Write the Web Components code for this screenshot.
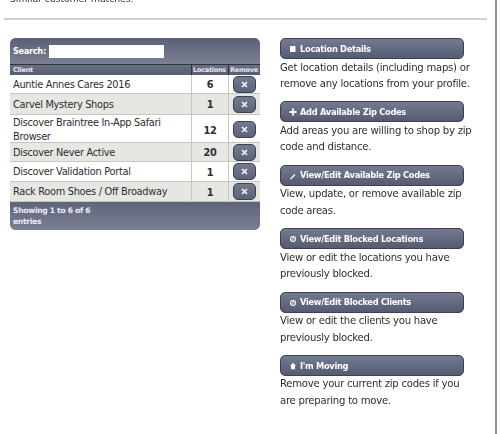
<!DOCTYPE html>
<html>
<head>
<meta charset="utf-8">
<style>
  html, body { margin: 0; padding: 0; background: #fff; }
  body { width: 500px; height: 434px; overflow: hidden; font-family: "DejaVu Sans", sans-serif; color: #333; }
</style>
</head>
<body>
<profile-page>
  <client-table slot="left"></client-table>
  <action-item slot="right" icon="square" label="Location Details">Get location details (including maps) or remove any locations from your profile.</action-item>
  <action-item slot="right" icon="plus" label="Add Available Zip Codes">Add areas you are willing to shop by zip code and distance.</action-item>
  <action-item slot="right" icon="pencil" label="View/Edit Available Zip Codes">View, update, or remove available zip code areas.</action-item>
  <action-item slot="right" icon="block" label="View/Edit Blocked Locations">View or edit the locations you have previously blocked.</action-item>
  <action-item slot="right" icon="block" label="View/Edit Blocked Clients">View or edit the clients you have previously blocked.</action-item>
  <action-item slot="right" icon="home" label="I'm Moving">Remove your current zip codes if you are preparing to move.</action-item>
</profile-page>

<script>
(function (customElements) {
  'use strict';

  const ICONS = {
    square: '<rect x="2" y="2" width="5.5" height="6" fill="#fff"/>',
    plus: '<path d="M5 1.5v7M1.5 5h7" stroke="#fff" stroke-width="1.8"/>',
    pencil: '<path d="M2.5 8L7 3.5" stroke="#fff" stroke-width="1.3"/>',
    block: '<circle cx="5" cy="5" r="2.4" fill="none" stroke="#fff" stroke-width="1.1"/><path d="M3.4 6.6l3.2-3.2" stroke="#fff" stroke-width=".9"/>',
    home: '<path d="M5 1.8L2 5h1v3.2h4V5h1z" fill="#fff"/>'
  };

  class ProfilePage extends HTMLElement {
    constructor() {
      super();
      this.attachShadow({ mode: 'open' }).innerHTML = `
        <style>
          :host { display: block; position: relative; height: 434px; filter: blur(0.5px); }
          .cut { height: 4px; overflow: hidden; padding-left: 10px; font-size: 9.2px; color: #333; }
          .cut span { display: block; margin-top: -7px; line-height: 11px; }
          hr { margin: 14px 0 0 4px; width: 483px; height: 2px; border: 0; background: #d0d0d0; }
          .cols { display: flex; margin: 18px 0 0 10px; }
          .left { flex: none; width: 250px; }
          .right { flex: none; width: 192px; margin-left: 20px; display: flex; flex-direction: column; }
          .edge { position: absolute; top: 0; left: 495px; bottom: 0; width: 2px; background: #8f8f8f; }
        </style>
        <div class="cut"><span>Similar customer matches.</span></div>
        <hr>
        <div class="cols">
          <div class="left"><slot name="left"></slot></div>
          <div class="right"><slot name="right"></slot></div>
        </div>
        <div class="edge"></div>`;
    }
  }

  class ClientTable extends HTMLElement {
    constructor() {
      super();
      const rows = [
        ['Auntie Annes Cares 2016', '6', 19],
        ['Carvel Mystery Shops', '1', 21],
        ['Discover Braintree In-App Safari Browser', '12', 28],
        ['Discover Never Active', '20', 19],
        ['Discover Validation Portal', '1', 20],
        ['Rack Room Shoes / Off Broadway', '1', 20]
      ];
      const body = rows.map((r, i) => `
        <div class="row ${i % 2 ? 'even' : ''}" style="height:${r[2]}px">
          <div class="c name">${r[0]}</div>
          <div class="c num">${r[1]}</div>
          <div class="c rem"><remove-button></remove-button></div>
        </div>`).join('');
      this.attachShadow({ mode: 'open' }).innerHTML = `
        <style>
          :host { display: block; width: 250px; font-size: 9.8px; letter-spacing: -.3px; color: #2e2e2e; }
          .box { border-radius: 6px; overflow: hidden; background: #5f6579; }
          .search { height: 26px; display: flex; align-items: center; padding-left: 3px; color: #fff; font-weight: bold; font-size: 8.2px;
            background: linear-gradient(#5a6075, #7b8093); }
          .search .field { width: 115px; height: 13px; background: #fff; margin-left: 3px; }
          .head { display: grid; grid-template-columns: 181px 37px 32px; height: 11px; box-sizing: border-box; border-top: 1px solid #2f3340;
            background: linear-gradient(#6c7286, #565c70); color: #e8e8ee; font-size: 6.6px; font-weight: bold; line-height: 10px; }
          .head div { padding-left: 3px; white-space: nowrap; }
          .head div + div { border-left: 1px solid #2f3340; padding-left: 1px; }
          .row { display: grid; grid-template-columns: 181px 37px 32px; background: #fff; border-bottom: 1px solid #c8c6c0; box-sizing: border-box; }
          .row.even { background: #e6e6e3; }
          .c { display: flex; align-items: center; }
          .name { padding: 1px 0 0 3px; line-height: 14px; }
          .num { justify-content: center; font-weight: bold; border-left: 1px solid #c8c6c0; padding-top: 1px; }
          .rem { justify-content: center; border-left: 1px solid #c8c6c0; }
          .foot { height: 28px; box-sizing: border-box; padding: 4px 3px; color: #eef; font-size: 7.6px; font-weight: bold; line-height: 10.5px;
            background: linear-gradient(#5f6579, #7a7f92); }
        </style>
        <div class="box">
          <div class="search">Search:<div class="field"></div></div>
          <div class="head"><div>Client</div><div>Locations</div><div>Remove</div></div>
          ${body}
          <div class="foot">Showing 1 to 6 of 6<br>entries</div>
        </div>`;
    }
  }

  class RemoveButton extends HTMLElement {
    constructor() {
      super();
      this.attachShadow({ mode: 'open' }).innerHTML = `
        <style>
          :host { display: flex; width: 23px; height: 17px; align-items: center; justify-content: center; box-sizing: border-box;
            border: 1px solid #3c4152; border-radius: 5px; background: linear-gradient(#757b8f, #5c6277); }
        </style>
        <svg width="7" height="7" viewBox="0 0 7 7"><path d="M1 1l5 5M6 1L1 6" stroke="#f2f2f2" stroke-width="1.7"/></svg>`;
    }
  }

  class ActionItem extends HTMLElement {
    constructor() {
      super();
      const icon = ICONS[this.getAttribute('icon')] || '';
      const label = this.getAttribute('label');
      this.attachShadow({ mode: 'open' }).innerHTML = `
        <style>
          :host { display: block; height: 63.4px; font-size: 10.1px; letter-spacing: -.25px; line-height: 16.6px; color: #2e2e2e; }
          .btn { display: flex; align-items: center; width: 184px; height: 21px; box-sizing: border-box; border: 1px solid #3c4152; border-radius: 5px; padding: 1px 0 0 7px;
            background: linear-gradient(#747a8f, #555b70); color: #fff; font-size: 8.3px; letter-spacing: -.3px; font-weight: bold; }
          svg { margin-right: 2px; flex: none; }
          p { margin: .5px 0 0; }
        </style>
        <div class="btn"><svg width="10" height="10" viewBox="0 0 10 10">${icon}</svg>${label}</div>
        <p><slot></slot></p>`;
    }
  }

  customElements.define('remove-button', RemoveButton);
  customElements.define('client-table', ClientTable);
  customElements.define('action-item', ActionItem);
  customElements.define('profile-page', ProfilePage);
})(window.customElements);
</script>
</body>
</html>
